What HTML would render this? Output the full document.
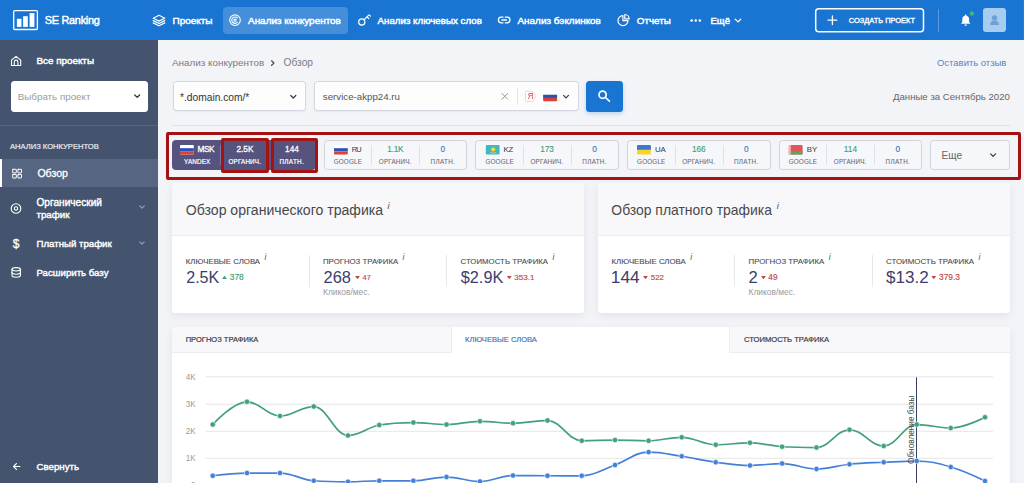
<!DOCTYPE html>
<html lang="ru">
<head>
<meta charset="utf-8">
<title>SE Ranking — Анализ конкурентов</title>
<style>
*{box-sizing:border-box;margin:0;padding:0}
html,body{width:1024px;height:483px;overflow:hidden;background:#f3f4f8;font-family:"Liberation Sans",sans-serif}
#root{position:relative;width:1024px;height:483px;overflow:hidden;background:#f3f4f8}
.a{position:absolute}
.t{position:absolute;white-space:nowrap;display:block}
#hdr{left:0;top:0;width:1024px;height:40px;background:#1a75d2}
#side{left:0;top:40px;width:158px;height:443px;background:#44546f}
.navact{left:222.5px;top:7px;width:125.5px;height:27px;border-radius:4px;background:rgba(255,255,255,.19)}
.btn-create{left:815px;top:8px;width:109px;height:24.4px;border:1.6px solid #fff;border-radius:3.5px}
.hdiv{left:938px;top:8.5px;width:1px;height:23px;background:rgba(255,255,255,.28)}
.avatar{left:983px;top:8.4px;width:23px;height:23.2px;border-radius:3px;background:#a6cdf0}
.sel-side{left:10.7px;top:80.7px;width:137.3px;height:31.6px;border-radius:3.5px;background:#fff}
.sdiv{left:0;top:124.6px;width:158px;height:1px;background:#56667f}
.sact{left:0;top:158.7px;width:158px;height:28.4px;background:#566682}
.sact:before{content:"";position:absolute;left:0;top:0;width:2px;height:100%;background:#fff}
.inp{background:#fdfdfe;border:1px solid #d4d7e0;border-radius:3.5px;box-shadow:0 1px 2px rgba(40,50,80,.06)}
.card{background:#fff;border-radius:3px;box-shadow:0 3px 8px rgba(60,70,110,.085)}
.chip{top:139.6px;width:143.8px;height:30.6px;border:1px solid #cfd3de;border-radius:3.5px;background:#f6f7fa}
.chip i{position:absolute;top:4.5px;width:1px;height:19.5px;background:#e0e2e9}
.chip.on{background:#56537e;border-color:#56537e}
.chip.on i{background:#7a779f}
.redbox{border:3px solid #a61212;border-radius:2px}
.vd{width:1px;background:#e7e8ee;top:255px;height:31.5px}
</style>
</head>
<body>
<div id="root">
<!-- header -->
<div id="hdr" class="a"></div>
<div class="a navact"></div>
<div class="a hdiv"></div>
<div class="a avatar"></div>
<!-- sidebar -->
<div id="side" class="a"></div>
<div class="a sel-side"></div>
<div class="a sdiv"></div>
<div class="a sact"></div>

<!-- main: top controls -->
<div class="a" style="left:172px;top:124.8px;width:838px;height:1px;background:#dfe1e8"></div>
<div class="a inp" style="left:172.5px;top:81px;width:133.5px;height:30.2px"></div>
<div class="a inp" style="left:313.5px;top:81px;width:265.2px;height:30.2px"></div>
<div class="a" style="left:517.3px;top:87.5px;width:1px;height:17px;background:#e3e4ea"></div>
<div class="a" style="left:586px;top:80.8px;width:37px;height:31px;border-radius:3.5px;background:#1a75d2;box-shadow:0 2px 4px rgba(26,117,210,.25)"></div>

<!-- chips -->
<div class="a chip on" style="left:172px"><i style="left:47px"></i></div>
<div class="a chip" style="left:323.7px"><i style="left:46.5px"></i><i style="left:94.5px"></i></div>
<div class="a chip" style="left:475.4px"><i style="left:46.5px"></i><i style="left:94.5px"></i></div>
<div class="a chip" style="left:627.1px"><i style="left:46.5px"></i><i style="left:94.5px"></i></div>
<div class="a chip" style="left:778.7px"><i style="left:46.5px"></i><i style="left:94.5px"></i></div>
<div class="a chip" style="left:930.4px;width:79.4px"></div>
<div class="a redbox" style="left:166px;top:132px;width:855px;height:48px"></div>
<div class="a redbox" style="left:221px;top:138px;width:48px;height:35px"></div>
<div class="a redbox" style="left:271px;top:138px;width:47px;height:35px"></div>

<!-- cards -->
<div class="a card" style="left:172px;top:183px;width:412.4px;height:130.2px"></div>
<div class="a" style="left:172px;top:183px;width:412.4px;height:52.6px;background:#f8f8fb;border-radius:3px 3px 0 0;border-bottom:1px solid #ecedf2"></div>
<div class="a card" style="left:597.6px;top:183px;width:412.4px;height:130.2px"></div>
<div class="a" style="left:597.6px;top:183px;width:412.4px;height:52.6px;background:#f8f8fb;border-radius:3px 3px 0 0;border-bottom:1px solid #ecedf2"></div>
<div class="a vd" style="left:309.4px"></div>
<div class="a vd" style="left:446.4px"></div>
<div class="a vd" style="left:734.4px"></div>
<div class="a vd" style="left:872.4px"></div>

<!-- chart card -->
<div class="a card" style="left:172px;top:327.3px;width:838px;height:170px"></div>
<div class="a" style="left:172px;top:327.3px;width:838px;height:25.6px;background:#f8f8fb;border-bottom:1px solid #ecedf2;border-radius:3px 3px 0 0"></div>
<div class="a" style="left:450.8px;top:327.3px;width:279.4px;height:25.8px;background:#fff;border-left:1px solid #ecedf2;border-right:1px solid #ecedf2"></div>

<div class="a" style="left:1023px;top:0;width:1px;height:40px;background:#2a7dd6"></div>
<svg class="a" style="left:0;top:0" width="1024" height="483" viewBox="0 0 1024 483">
<rect x="13.7" y="10.6" width="23.7" height="18.9" rx="1" fill="none" stroke="#fff" stroke-width="1.3"/>
<rect x="16.9" y="18.8" width="4.6" height="8.1" fill="#fff"/><rect x="23.1" y="16.2" width="4.7" height="10.7" fill="#fff"/><rect x="29.6" y="13.1" width="4.8" height="13.8" fill="#fff"/>
<g fill="none" stroke="#fff" stroke-linecap="round" stroke-linejoin="round" stroke-width="1.2"><path d="M159 15.3 L164.8 18.2 L159 21.1 L153.2 18.2 Z"/><path d="M153.2 20.6 L159 23.5 L164.8 20.6"/><path d="M153.2 22.9 L159 25.8 L164.8 22.9"/></g>
<g fill="none" stroke="#fff" stroke-linecap="round" stroke-linejoin="round" stroke-width="1.1"><circle cx="235" cy="20.2" r="5.3"/><path d="M237.3 18 A3.2 3.2 0 1 0 237.3 22.4"/><circle cx="235" cy="20.2" r="1.1"/></g>
<g fill="none" stroke="#fff" stroke-linecap="round" stroke-linejoin="round" stroke-width="1.2"><circle cx="361.8" cy="22" r="3.1"/><path d="M363.9 19.9 L369 14.8 M367 16.8 L368.9 18.7 M369 14.8 L370.4 16.2"/></g>
<g fill="none" stroke="#fff" stroke-linecap="round" stroke-linejoin="round" stroke-width="1.3"><path d="M503 17.2 H501.2 a2.8 2.8 0 0 0 0 5.6 H503"/><path d="M505.3 17.2 H507.1 a2.8 2.8 0 0 1 0 5.6 H505.3"/><path d="M501.9 20 H506.4"/></g>
<g fill="none" stroke="#fff" stroke-linecap="round" stroke-linejoin="round" stroke-width="1.2"><path d="M622.9 15.6 A5 5 0 1 0 628 20.7 H622.9 Z"/><path d="M624.8 14.5 V18.9 H629.2 A4.5 4.5 0 0 0 624.8 14.5 Z"/></g>
<g fill="#fff"><circle cx="691.6" cy="20.5" r="1.25"/><circle cx="695.7" cy="20.5" r="1.25"/><circle cx="699.8" cy="20.5" r="1.25"/></g>
<path fill="none" stroke="#fff" stroke-linecap="round" stroke-linejoin="round" stroke-width="1.3" d="M735.3 19.2 L738 21.9 L740.7 19.2"/>
<rect x="815.7" y="8.8" width="107.8" height="23" rx="3" fill="none" stroke="#fff" stroke-width="1.5"/>
<path fill="none" stroke="#fff" stroke-linecap="round" stroke-linejoin="round" stroke-width="1.3" d="M828 20.2 H836.8 M832.4 15.8 V24.6"/>
<g fill="#fff"><path d="M961 23.7 L962.3 22 V19.3 a3.4 3.6 0 0 1 6.8 0 V22 L970.4 23.7 Z"/><circle cx="965.7" cy="15.4" r="0.9"/><path d="M964.5 24.5 a1.2 1.4 0 0 0 2.4 0 Z"/></g>
<circle cx="971.9" cy="13.5" r="3.1" fill="#1a75d2"/><circle cx="971.9" cy="13.5" r="2.2" fill="#3cb878"/>
<g fill="#6ea2d5"><circle cx="994.5" cy="17.9" r="2.7"/><path d="M990 25 c0 -3 1.8 -4.4 4.5 -4.4 s4.5 1.4 4.5 4.4 Z"/></g>
<g fill="none" stroke="#fff" stroke-linecap="round" stroke-linejoin="round" stroke-width="1.1"><path d="M11.5 60.2 L16.1 56.3 L20.7 60.2 V65.5 H11.5 Z"/><path d="M14.3 65.3 V61.9 a1.8 1.8 0 0 1 3.6 0 V65.3"/></g>
<path fill="none" stroke="#333" stroke-width="1.3" stroke-linecap="round" stroke-linejoin="round" d="M134.8 95 L137.2 97.4 L139.6 95"/>
<g fill="none" stroke="#fff" stroke-linecap="round" stroke-linejoin="round" stroke-width="1"><rect x="12.7" y="169.3" width="3.6" height="3.6" rx=".3"/><rect x="17.9" y="169.3" width="3.6" height="3.6" rx=".3"/><rect x="12.7" y="174.4" width="3.6" height="3.6" rx=".3"/><rect x="17.9" y="174.4" width="3.6" height="3.6" rx=".3"/></g>
<g fill="none" stroke="#fff" stroke-linecap="round" stroke-linejoin="round" stroke-width="1.1"><circle cx="16" cy="208.5" r="4.8"/><circle cx="16" cy="208.5" r="1.7"/></g>
<g fill="none" stroke="#fff" stroke-linecap="round" stroke-linejoin="round" stroke-width="1.1"><ellipse cx="16.2" cy="269.3" rx="4.2" ry="1.7"/><path d="M12 269.3 V275.6 a4.2 1.7 0 0 0 8.4 0 V269.3"/><path d="M12 272.5 a4.2 1.7 0 0 0 8.4 0"/></g>
<g fill="none" stroke="#8f9bb0" stroke-width="1.2" stroke-linecap="round" stroke-linejoin="round"><path d="M139.8 206 L142 208.2 L144.2 206"/><path d="M139.8 241.8 L142 244 L144.2 241.8"/></g>
<path fill="none" stroke="#fff" stroke-linecap="round" stroke-linejoin="round" stroke-width="1.2" d="M19.8 466.5 H13.6 M16.4 463.7 L13.6 466.5 L16.4 469.3"/>
<path fill="none" stroke="#4a4a50" stroke-width="1.25" stroke-linecap="round" stroke-linejoin="round" d="M271.6 60.8 L273.9 63.05 L271.6 65.3"/>
<g fill="none" stroke="#3c3c44" stroke-width="1.2" stroke-linecap="round" stroke-linejoin="round"><path d="M290.8 95.5 L293.3 98 L295.8 95.5"/><path d="M563.5 95.4 L566 97.9 L568.5 95.4"/><path d="M990.6 153.9 L993.1 156.4 L995.6 153.9"/></g>
<path fill="none" stroke="#9a9a9a" stroke-width="1" stroke-linecap="round" d="M501.9 93.4 L507.7 99.2 M507.7 93.4 L501.9 99.2"/>
<path d="M526.6 91.2 H533 L535.6 96.3 L533 101.4 H526.6 a1.2 1.2 0 0 1 -1.2 -1.2 V92.4 a1.2 1.2 0 0 1 1.2 -1.2 Z" fill="#fff" stroke="#d9c8c0" stroke-width=".7"/>
<g fill="none" stroke="#fff" stroke-linecap="round" stroke-linejoin="round" stroke-width="1.7"><circle cx="602.6" cy="94.7" r="3.6"/><path d="M605.4 97.5 L609.4 101.2"/></g>
<g><rect x="543.1" y="91.5" width="14" height="9.7" rx="1" fill="#fff"/><rect x="543.1" y="94.73" width="14" height="3.23" fill="#2b50b8"/><path d="M543.1 97.97 H557.1 V100.20 a1 1 0 0 1 -1 1 H544.1 a1 1 0 0 1 -1 -1 Z" fill="#d8413a"/></g>
<g><rect x="180" y="145" width="13.8" height="9.5" rx="1" fill="#fff"/><rect x="180" y="148.17" width="13.8" height="3.17" fill="#2b50b8"/><path d="M180 151.33 H193.8 V153.50 a1 1 0 0 1 -1 1 H181 a1 1 0 0 1 -1 -1 Z" fill="#d8413a"/></g>
<g><rect x="334" y="145" width="13.8" height="9.6" rx="1" fill="#fff"/><rect x="334" y="148.20" width="13.8" height="3.20" fill="#2b50b8"/><path d="M334 151.40 H347.8 V153.60 a1 1 0 0 1 -1 1 H335 a1 1 0 0 1 -1 -1 Z" fill="#d8413a"/></g>
<g><rect x="485.8" y="145" width="13.8" height="9.6" rx="1" fill="#3fb8c4"/><circle cx="493.2" cy="149.50" r="2.1" fill="#f2d64a"/><path d="M490.2 152.40 q3 1.6 6 0" stroke="#f2d64a" stroke-width=".8" fill="none"/></g>
<g><rect x="637" y="145" width="13.9" height="9.6" rx="1" fill="#f7d42a"/><path d="M637 149.80 V146 a1 1 0 0 1 1 -1 H649.9 a1 1 0 0 1 1 1 V149.80 Z" fill="#3a78cf"/></g>
<g><rect x="788.8" y="145" width="13.8" height="9.6" rx="1" fill="#e0555a"/><path d="M788.8 151.34 H802.5999999999999 V153.60 a1 1 0 0 1 -1 1 H789.8 a1 1 0 0 1 -1 -1 Z" fill="#5aa95c"/><rect x="788.8" y="145" width="2" height="9.6" fill="#f1b9b4"/></g>
<path d="M222.1 278.9 H226.9 L224.5 275.7 Z" fill="#3f9c74"/>
<path d="M355.1 276.1 H359.9 L357.5 279.3 Z" fill="#c4473f"/>
<path d="M506.9 276.1 H511.7 L509.3 279.3 Z" fill="#c4473f"/>
<path d="M643.1 276.1 H647.9 L645.5 279.3 Z" fill="#c4473f"/>
<path d="M761.1 276.1 H765.9 L763.5 279.3 Z" fill="#c4473f"/>
<path d="M931.4 276.1 H936.2 L933.8 279.3 Z" fill="#c4473f"/>
<path d="M205.5 376.8 H993" stroke="#e7e7ea" stroke-width="1" fill="none"/>
<path d="M205.5 404.3 H993" stroke="#e7e7ea" stroke-width="1" fill="none"/>
<path d="M205.5 431.3 H993" stroke="#e7e7ea" stroke-width="1" fill="none"/>
<path d="M205.5 458.3 H993" stroke="#e7e7ea" stroke-width="1" fill="none"/>
<path d="M916.5 377.3 V483" stroke="#3a3d62" stroke-width="1" fill="none"/>
<path d="M212.75 424.50 C212.75 424.50 233.30 401.75 247.00 401.75 C260.20 401.75 266.80 416.00 280.00 416.00 C293.50 416.00 300.25 406.50 313.75 406.50 C327.45 406.50 334.30 435.50 348.00 435.50 C360.50 435.50 366.75 427.50 379.25 425.00 C392.91 422.50 399.74 422.50 413.40 422.50 C426.64 422.50 433.26 424.50 446.50 424.50 C459.90 424.50 466.60 421.25 480.00 421.25 C493.20 421.25 499.80 423.25 513.00 423.25 C526.80 423.25 533.70 420.50 547.50 420.50 C561.20 420.50 568.05 440.75 581.75 440.75 C595.05 440.75 601.70 440.00 615.00 440.00 C628.44 440.00 635.16 440.75 648.60 440.75 C661.86 440.75 668.49 437.25 681.75 437.25 C695.35 437.25 702.15 444.75 715.75 444.75 C729.45 444.75 736.30 442.75 750.00 442.75 C762.84 442.75 769.26 446.00 782.10 446.75 C795.86 447.50 802.74 447.50 816.50 447.50 C829.70 447.50 836.30 429.75 849.50 429.75 C863.20 429.75 870.05 446.00 883.75 446.00 C896.95 446.00 903.55 424.50 916.75 424.50 C930.35 424.50 937.15 428.00 950.75 428.00 C964.45 428.00 985.00 417.25 985.00 417.25" fill="none" stroke="#42a07a" stroke-width="1.75" stroke-linecap="round" stroke-linejoin="round"/>
<path d="M212.75 475.75 C212.75 475.75 233.30 473.00 247.00 473.00 C260.20 473.00 266.80 473.00 280.00 473.00 C293.50 473.00 300.25 479.75 313.75 480.75 C327.45 481.75 334.30 481.75 348.00 481.75 C360.50 481.75 366.75 480.75 379.25 480.75 C392.91 480.75 399.74 480.75 413.40 480.75 C426.64 480.75 433.26 477.00 446.50 477.00 C459.90 477.00 466.60 481.50 480.00 481.50 C493.20 481.50 499.80 475.50 513.00 475.50 C526.80 475.50 533.70 475.75 547.50 475.75 C561.20 475.75 568.05 475.75 581.75 475.75 C595.05 475.75 601.70 469.71 615.00 465.00 C628.44 460.25 635.16 452.10 648.60 452.10 C661.86 452.10 668.49 454.25 681.75 456.25 C695.35 458.31 702.15 460.41 715.75 462.25 C729.45 464.11 736.30 465.50 750.00 465.50 C762.84 465.50 769.26 463.50 782.10 463.50 C795.86 463.50 802.74 469.00 816.50 469.00 C829.70 469.00 836.30 465.57 849.50 464.25 C863.20 462.87 870.05 462.91 883.75 462.25 C896.95 461.61 903.55 461.00 916.75 461.00 C930.35 461.00 937.15 463.01 950.75 467.00 C964.45 471.01 985.00 481.00 985.00 481.00" fill="none" stroke="#4380d9" stroke-width="1.75" stroke-linecap="round" stroke-linejoin="round"/>
<g fill="#42a07a" stroke="#fff" stroke-width=".6"><circle cx="212.75" cy="424.50" r="2.7"/><circle cx="247.00" cy="401.75" r="2.7"/><circle cx="280.00" cy="416.00" r="2.7"/><circle cx="313.75" cy="406.50" r="2.7"/><circle cx="348.00" cy="435.50" r="2.7"/><circle cx="379.25" cy="425.00" r="2.7"/><circle cx="413.40" cy="422.50" r="2.7"/><circle cx="446.50" cy="424.50" r="2.7"/><circle cx="480.00" cy="421.25" r="2.7"/><circle cx="513.00" cy="423.25" r="2.7"/><circle cx="547.50" cy="420.50" r="2.7"/><circle cx="581.75" cy="440.75" r="2.7"/><circle cx="615.00" cy="440.00" r="2.7"/><circle cx="648.60" cy="440.75" r="2.7"/><circle cx="681.75" cy="437.25" r="2.7"/><circle cx="715.75" cy="444.75" r="2.7"/><circle cx="750.00" cy="442.75" r="2.7"/><circle cx="782.10" cy="446.75" r="2.7"/><circle cx="816.50" cy="447.50" r="2.7"/><circle cx="849.50" cy="429.75" r="2.7"/><circle cx="883.75" cy="446.00" r="2.7"/><circle cx="916.75" cy="424.50" r="2.7"/><circle cx="950.75" cy="428.00" r="2.7"/><circle cx="985.00" cy="417.25" r="2.7"/></g>
<g fill="#4380d9" stroke="#fff" stroke-width=".6"><circle cx="212.75" cy="475.75" r="2.7"/><circle cx="247.00" cy="473.00" r="2.7"/><circle cx="280.00" cy="473.00" r="2.7"/><circle cx="313.75" cy="480.75" r="2.7"/><circle cx="348.00" cy="481.75" r="2.7"/><circle cx="379.25" cy="480.75" r="2.7"/><circle cx="413.40" cy="480.75" r="2.7"/><circle cx="446.50" cy="477.00" r="2.7"/><circle cx="480.00" cy="481.50" r="2.7"/><circle cx="513.00" cy="475.50" r="2.7"/><circle cx="547.50" cy="475.75" r="2.7"/><circle cx="581.75" cy="475.75" r="2.7"/><circle cx="615.00" cy="465.00" r="2.7"/><circle cx="648.60" cy="452.10" r="2.7"/><circle cx="681.75" cy="456.25" r="2.7"/><circle cx="715.75" cy="462.25" r="2.7"/><circle cx="750.00" cy="465.50" r="2.7"/><circle cx="782.10" cy="463.50" r="2.7"/><circle cx="816.50" cy="469.00" r="2.7"/><circle cx="849.50" cy="464.25" r="2.7"/><circle cx="883.75" cy="462.25" r="2.7"/><circle cx="916.75" cy="461.00" r="2.7"/><circle cx="950.75" cy="467.00" r="2.7"/><circle cx="985.00" cy="481.00" r="2.7"/></g>
</svg>
<span class="t" style="left:44.80px;top:12.65px;line-height:14px;font-size:10.9px;color:#fff;letter-spacing:-0.280px;-webkit-text-stroke:0.45px #fff;">SE Ranking</span>
<span class="t" style="left:172.50px;top:13.73px;line-height:13px;font-size:9.97px;color:#fff;-webkit-text-stroke:0.45px #fff;">Проекты</span>
<span class="t" style="left:248.00px;top:13.72px;line-height:13px;font-size:9.95px;color:#fff;-webkit-text-stroke:0.45px #fff;">Анализ конкурентов</span>
<span class="t" style="left:377.50px;top:13.65px;line-height:13px;font-size:9.75px;color:#fff;-webkit-text-stroke:0.45px #fff;">Анализ ключевых слов</span>
<span class="t" style="left:517.50px;top:13.72px;line-height:13px;font-size:9.93px;color:#fff;-webkit-text-stroke:0.45px #fff;">Анализ бэклинков</span>
<span class="t" style="left:636.80px;top:13.68px;line-height:13px;font-size:9.83px;color:#fff;-webkit-text-stroke:0.45px #fff;">Отчеты</span>
<span class="t" style="left:710.50px;top:14.58px;line-height:12px;font-size:9.53px;color:#fff;letter-spacing:0.016px;-webkit-text-stroke:0.45px #fff;">Ещё</span>
<span class="t" style="left:848.80px;top:15.76px;line-height:10px;font-size:7.44px;color:#fff;-webkit-text-stroke:0.35px #fff;">СОЗДАТЬ ПРОЕКТ</span>
<span class="t" style="left:36.50px;top:54.39px;line-height:13px;font-size:9.85px;color:#fff;-webkit-text-stroke:0.45px #fff;">Все проекты</span>
<span class="t" style="left:17.80px;top:89.97px;line-height:13px;font-size:9.79px;color:#9a9a9a;">Выбрать проект</span>
<span class="t" style="left:10.00px;top:141.61px;line-height:10px;font-size:7.59px;color:#e8ebf0;-webkit-text-stroke:0.2px #e8ebf0;">АНАЛИЗ КОНКУРЕНТОВ</span>
<span class="t" style="left:37.40px;top:165.84px;line-height:14px;font-size:10.59px;color:#fff;-webkit-text-stroke:0.3px #fff;">Обзор</span>
<span class="t" style="left:36.50px;top:195.68px;line-height:13px;font-size:10.11px;color:#fff;letter-spacing:0.011px;-webkit-text-stroke:0.4px #fff;">Органический</span>
<span class="t" style="left:36.50px;top:207.65px;line-height:13px;font-size:9.74px;color:#fff;-webkit-text-stroke:0.4px #fff;">трафик</span>
<span class="t" style="left:36.50px;top:236.82px;line-height:13px;font-size:9.66px;color:#fff;-webkit-text-stroke:0.4px #fff;">Платный трафик</span>
<span class="t" style="left:36.50px;top:265.62px;line-height:13px;font-size:9.65px;color:#fff;letter-spacing:0.012px;-webkit-text-stroke:0.4px #fff;">Расширить базу</span>
<span class="t" style="left:36.50px;top:459.93px;line-height:13px;font-size:9.69px;color:#fff;letter-spacing:0.011px;-webkit-text-stroke:0.4px #fff;">Свернуть</span>
<span class="t" style="left:172.00px;top:56.00px;line-height:13px;font-size:9.87px;color:#7b7b80;">Анализ конкурентов</span>
<span class="t" style="left:283.60px;top:56.20px;line-height:13px;font-size:10.18px;color:#7b7b80;">Обзор</span>
<span class="t" style="left:180.00px;top:90.52px;line-height:13px;font-size:10.22px;color:#333;">*.domain.com/*</span>
<span class="t" style="left:322.80px;top:90.34px;line-height:13px;font-size:9.71px;color:#555;">service-akpp24.ru</span>
<span class="t" style="left:937.00px;top:57.26px;line-height:12px;font-size:9.48px;color:#5a82c4;">Оставить отзыв</span>
<span class="t" style="left:893.00px;top:89.91px;line-height:13px;font-size:9.62px;color:#66666a;">Данные за Сентябрь 2020</span>
<span class="t" style="left:941.50px;top:148.76px;line-height:13px;font-size:10.07px;color:#666;">Еще</span>
<span class="t" style="left:197.50px;top:144.36px;line-height:11px;font-size:8.3px;color:#fff;letter-spacing:-0.442px;-webkit-text-stroke:0.3px #fff;">MSK</span>
<span class="t" style="left:184.00px;top:158.27px;line-height:8px;font-size:6.3px;color:#fff;letter-spacing:0.173px;-webkit-text-stroke:0.2px #fff;">YANDEX</span>
<span class="t" style="left:236.55px;top:144.36px;line-height:11px;font-size:8.3px;color:#fff;letter-spacing:-0.059px;-webkit-text-stroke:0.3px #fff;">2.5K</span>
<span class="t" style="left:228.45px;top:158.27px;line-height:8px;font-size:6.3px;color:#fff;letter-spacing:0.170px;-webkit-text-stroke:0.2px #fff;">ОРГАНИЧ.</span>
<span class="t" style="left:285.10px;top:144.36px;line-height:11px;font-size:8.3px;color:#fff;letter-spacing:-0.022px;-webkit-text-stroke:0.3px #fff;">144</span>
<span class="t" style="left:279.50px;top:158.27px;line-height:8px;font-size:6.3px;color:#fff;letter-spacing:0.337px;-webkit-text-stroke:0.2px #fff;">ПЛАТН.</span>
<span class="t" style="left:351.70px;top:145.08px;line-height:10px;font-size:7.5px;color:#3c3c50;letter-spacing:-0.844px;-webkit-text-stroke:0.05px #3c3c50;">RU</span>
<span class="t" style="left:333.70px;top:158.27px;line-height:8px;font-size:6.3px;color:#6b6b75;letter-spacing:0.181px;-webkit-text-stroke:0.08px #6b6b75;">GOOGLE</span>
<span class="t" style="left:387.25px;top:144.36px;line-height:11px;font-size:8.3px;color:#3f9c74;letter-spacing:-0.259px;-webkit-text-stroke:0.12px #3f9c74;">1.1K</span>
<span class="t" style="left:378.85px;top:158.27px;line-height:8px;font-size:6.3px;color:#6b6b75;letter-spacing:0.170px;-webkit-text-stroke:0.08px #6b6b75;">ОРГАНИЧ.</span>
<span class="t" style="left:440.60px;top:144.36px;line-height:11px;font-size:8.3px;color:#3d74b8;-webkit-text-stroke:0.12px #3d74b8;">0</span>
<span class="t" style="left:430.60px;top:158.27px;line-height:8px;font-size:6.3px;color:#6b6b75;letter-spacing:0.337px;-webkit-text-stroke:0.08px #6b6b75;">ПЛАТН.</span>
<span class="t" style="left:503.40px;top:145.18px;line-height:10px;font-size:7.8px;color:#3c3c50;letter-spacing:0.031px;-webkit-text-stroke:0.05px #3c3c50;">KZ</span>
<span class="t" style="left:485.40px;top:158.27px;line-height:8px;font-size:6.3px;color:#6b6b75;letter-spacing:0.181px;-webkit-text-stroke:0.08px #6b6b75;">GOOGLE</span>
<span class="t" style="left:540.35px;top:144.36px;line-height:11px;font-size:8.3px;color:#3f9c74;letter-spacing:-0.172px;-webkit-text-stroke:0.12px #3f9c74;">173</span>
<span class="t" style="left:530.55px;top:158.27px;line-height:8px;font-size:6.3px;color:#6b6b75;letter-spacing:0.170px;-webkit-text-stroke:0.08px #6b6b75;">ОРГАНИЧ.</span>
<span class="t" style="left:592.30px;top:144.36px;line-height:11px;font-size:8.3px;color:#3d74b8;-webkit-text-stroke:0.12px #3d74b8;">0</span>
<span class="t" style="left:582.30px;top:158.27px;line-height:8px;font-size:6.3px;color:#6b6b75;letter-spacing:0.337px;-webkit-text-stroke:0.08px #6b6b75;">ПЛАТН.</span>
<span class="t" style="left:655.10px;top:145.18px;line-height:10px;font-size:7.8px;color:#3c3c50;letter-spacing:-0.344px;-webkit-text-stroke:0.05px #3c3c50;">UA</span>
<span class="t" style="left:637.10px;top:158.27px;line-height:8px;font-size:6.3px;color:#6b6b75;letter-spacing:0.181px;-webkit-text-stroke:0.08px #6b6b75;">GOOGLE</span>
<span class="t" style="left:691.90px;top:144.36px;line-height:11px;font-size:8.3px;color:#3f9c74;letter-spacing:-0.022px;-webkit-text-stroke:0.12px #3f9c74;">166</span>
<span class="t" style="left:682.25px;top:158.27px;line-height:8px;font-size:6.3px;color:#6b6b75;letter-spacing:0.170px;-webkit-text-stroke:0.08px #6b6b75;">ОРГАНИЧ.</span>
<span class="t" style="left:744.00px;top:144.36px;line-height:11px;font-size:8.3px;color:#3d74b8;-webkit-text-stroke:0.12px #3d74b8;">0</span>
<span class="t" style="left:734.00px;top:158.27px;line-height:8px;font-size:6.3px;color:#6b6b75;letter-spacing:0.337px;-webkit-text-stroke:0.08px #6b6b75;">ПЛАТН.</span>
<span class="t" style="left:806.70px;top:145.18px;line-height:10px;font-size:7.8px;color:#3c3c50;letter-spacing:0.094px;-webkit-text-stroke:0.05px #3c3c50;">BY</span>
<span class="t" style="left:788.70px;top:158.27px;line-height:8px;font-size:6.3px;color:#6b6b75;letter-spacing:0.181px;-webkit-text-stroke:0.08px #6b6b75;">GOOGLE</span>
<span class="t" style="left:843.80px;top:144.36px;line-height:11px;font-size:8.3px;color:#3f9c74;letter-spacing:-0.017px;-webkit-text-stroke:0.12px #3f9c74;">114</span>
<span class="t" style="left:833.85px;top:158.27px;line-height:8px;font-size:6.3px;color:#6b6b75;letter-spacing:0.170px;-webkit-text-stroke:0.08px #6b6b75;">ОРГАНИЧ.</span>
<span class="t" style="left:895.60px;top:144.36px;line-height:11px;font-size:8.3px;color:#3d74b8;-webkit-text-stroke:0.12px #3d74b8;">0</span>
<span class="t" style="left:885.60px;top:158.27px;line-height:8px;font-size:6.3px;color:#6b6b75;letter-spacing:0.337px;-webkit-text-stroke:0.08px #6b6b75;">ПЛАТН.</span>
<span class="t" style="left:185.80px;top:201.45px;line-height:18px;font-size:14.09px;color:#48484c;">Обзор органического трафика</span>
<span class="t" style="left:387.60px;top:199.67px;line-height:12px;font-size:9.5px;color:#555;font-style:italic;">i</span>
<span class="t" style="left:611.30px;top:201.39px;line-height:18px;font-size:13.93px;color:#48484c;">Обзор платного трафика</span>
<span class="t" style="left:776.80px;top:199.67px;line-height:12px;font-size:9.5px;color:#555;font-style:italic;">i</span>
<span class="t" style="left:185.80px;top:257.10px;line-height:10px;font-size:7.85px;color:#4a4a52;-webkit-text-stroke:0.1px #4a4a52;">КЛЮЧЕВЫЕ СЛОВА</span>
<span class="t" style="left:264.50px;top:252.46px;line-height:11px;font-size:8.6px;color:#555;font-style:italic;">i</span>
<span class="t" style="left:186.20px;top:266.73px;line-height:21px;font-size:16.09px;color:#3b3e6c;">2.5K</span>
<span class="t" style="left:229.80px;top:272.19px;line-height:11px;font-size:8.39px;color:#3f9c74;-webkit-text-stroke:0.15px #3f9c74;">378</span>
<span class="t" style="left:323.00px;top:257.08px;line-height:10px;font-size:7.8px;color:#4a4a52;-webkit-text-stroke:0.1px #4a4a52;">ПРОГНОЗ ТРАФИКА</span>
<span class="t" style="left:402.60px;top:252.46px;line-height:11px;font-size:8.6px;color:#555;font-style:italic;">i</span>
<span class="t" style="left:323.60px;top:266.85px;line-height:21px;font-size:16.42px;color:#3b3e6c;letter-spacing:0.012px;">268</span>
<span class="t" style="left:362.50px;top:272.86px;line-height:10px;font-size:7.45px;color:#c4473f;letter-spacing:0.019px;-webkit-text-stroke:0.15px #c4473f;">47</span>
<span class="t" style="left:323.00px;top:286.80px;line-height:11px;font-size:8.42px;color:#9a9aa0;">Кликов/мес.</span>
<span class="t" style="left:460.50px;top:257.10px;line-height:10px;font-size:7.84px;color:#4a4a52;letter-spacing:0.010px;-webkit-text-stroke:0.1px #4a4a52;">СТОИМОСТЬ ТРАФИКА</span>
<span class="t" style="left:552.50px;top:252.46px;line-height:11px;font-size:8.6px;color:#555;font-style:italic;">i</span>
<span class="t" style="left:460.80px;top:266.79px;line-height:21px;font-size:16.26px;color:#3b3e6c;">$2.9K</span>
<span class="t" style="left:514.30px;top:273.08px;line-height:10px;font-size:8.07px;color:#c4473f;-webkit-text-stroke:0.15px #c4473f;">353.1</span>
<span class="t" style="left:611.50px;top:257.10px;line-height:10px;font-size:7.85px;color:#4a4a52;-webkit-text-stroke:0.1px #4a4a52;">КЛЮЧЕВЫЕ СЛОВА</span>
<span class="t" style="left:690.20px;top:252.46px;line-height:11px;font-size:8.6px;color:#555;font-style:italic;">i</span>
<span class="t" style="left:610.80px;top:266.16px;line-height:23px;font-size:17.32px;color:#3b3e6c;">144</span>
<span class="t" style="left:650.80px;top:273.02px;line-height:10px;font-size:7.91px;color:#c4473f;-webkit-text-stroke:0.15px #c4473f;">522</span>
<span class="t" style="left:748.50px;top:257.10px;line-height:10px;font-size:7.86px;color:#4a4a52;-webkit-text-stroke:0.1px #4a4a52;">ПРОГНОЗ ТРАФИКА</span>
<span class="t" style="left:828.70px;top:252.46px;line-height:11px;font-size:8.6px;color:#555;font-style:italic;">i</span>
<span class="t" style="left:748.40px;top:266.88px;line-height:21px;font-size:16.5px;color:#3b3e6c;">2</span>
<span class="t" style="left:768.30px;top:272.14px;line-height:11px;font-size:8.26px;color:#c4473f;letter-spacing:0.013px;-webkit-text-stroke:0.15px #c4473f;">49</span>
<span class="t" style="left:748.50px;top:286.80px;line-height:11px;font-size:8.42px;color:#9a9aa0;">Кликов/мес.</span>
<span class="t" style="left:886.00px;top:257.12px;line-height:10px;font-size:7.9px;color:#4a4a52;-webkit-text-stroke:0.1px #4a4a52;">СТОИМОСТЬ ТРАФИКА</span>
<span class="t" style="left:978.60px;top:252.46px;line-height:11px;font-size:8.6px;color:#555;font-style:italic;">i</span>
<span class="t" style="left:886.00px;top:267.07px;line-height:22px;font-size:17.06px;color:#3b3e6c;">$13.2</span>
<span class="t" style="left:939.00px;top:272.19px;line-height:11px;font-size:8.39px;color:#c4473f;-webkit-text-stroke:0.15px #c4473f;">379.3</span>
<span class="t" style="left:185.70px;top:334.89px;line-height:10px;font-size:7.53px;color:#3a3a44;letter-spacing:0.012px;-webkit-text-stroke:0.2px #3a3a44;">ПРОГНОЗ ТРАФИКА</span>
<span class="t" style="left:465.00px;top:334.91px;line-height:10px;font-size:7.6px;color:#3f72b5;-webkit-text-stroke:0.15px #3f72b5;">КЛЮЧЕВЫЕ СЛОВА</span>
<span class="t" style="left:744.00px;top:334.92px;line-height:10px;font-size:7.61px;color:#3a3a44;-webkit-text-stroke:0.2px #3a3a44;">СТОИМОСТЬ ТРАФИКА</span>
<span class="t" style="left:185.80px;top:371.71px;line-height:11px;font-size:8.17px;color:#9a9aa0;letter-spacing:0.016px;">4K</span>
<span class="t" style="left:185.80px;top:399.21px;line-height:11px;font-size:8.17px;color:#9a9aa0;letter-spacing:0.016px;">3K</span>
<span class="t" style="left:185.80px;top:426.21px;line-height:11px;font-size:8.17px;color:#9a9aa0;letter-spacing:0.016px;">2K</span>
<span class="t" style="left:185.80px;top:453.21px;line-height:11px;font-size:8.17px;color:#9a9aa0;letter-spacing:0.016px;">1K</span>
<span class="t" style="left:190.80px;top:480.42px;line-height:11px;font-size:8.2px;color:#9a9aa0;">0</span>
<span class="t" style="left:12.80px;top:236.43px;line-height:16px;font-size:12px;color:#fff;-webkit-text-stroke:0.3px #fff;">$</span>
<span class="t" style="left:527.40px;top:91.26px;line-height:11px;font-size:8.3px;color:#e0452c;">Я</span>
<span class="t" style="left:906.03px;top:464.20px;transform-origin:0 0;transform:rotate(-90deg);line-height:11px;font-size:8.23px;color:#48484c;">Обновление базы</span>
</div>
</body>
</html>
